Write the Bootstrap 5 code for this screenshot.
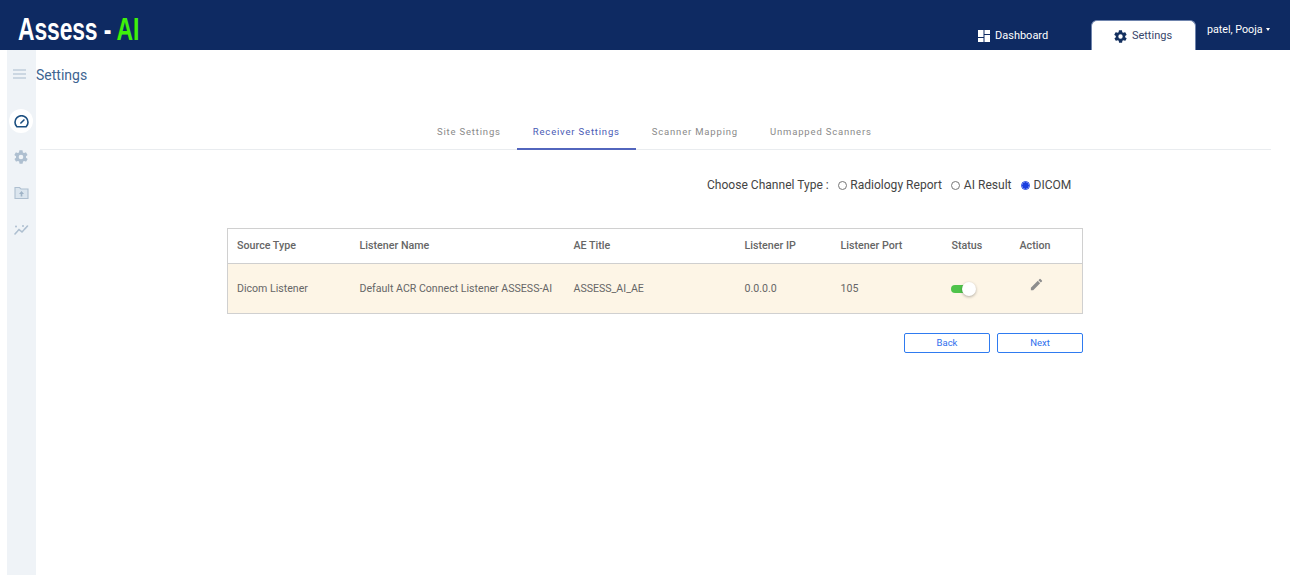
<!DOCTYPE html>
<html lang="en">
<head>
<meta charset="utf-8">
<title>Settings</title>
<link href="https://cdn.jsdelivr.net/npm/bootstrap@5.3.0/dist/css/bootstrap.min.css" rel="stylesheet">
<style>
html,body{height:100%;overflow:hidden}
body{font-family:Roboto,"Liberation Sans",sans-serif;background:#fff;color:#555}
.top-bar{height:50px;background:#0e2a62;border-bottom:1px solid #0e2a62}
.logo-text{font-family:"Liberation Sans",Arial,sans-serif;font-weight:700;font-size:31px;line-height:50px;color:#fff;margin-left:18px;transform:scaleX(.74);transform-origin:left center;white-space:nowrap;letter-spacing:-.2px;margin-top:5px}
.logo-ai{color:#3ff00a}
.nav-dash{color:#fff;font-size:11px;width:114px;padding:2px 0 0 1px;margin-top:20px;height:30px;display:flex;align-items:center;gap:5px;justify-content:flex-start}
.nav-set{width:105px;height:30px;margin-top:20px;background:#fff;border:1px solid #6f84ad;border-bottom:0;border-radius:6px 6px 0 0;color:#38456b;font-size:11px;display:flex;align-items:center;justify-content:center;gap:4px;padding:2px 2px 0 0}
.nav-user{color:#fff;font-size:10.7px;width:94px;padding:23px 0 0 11px;line-height:14px;white-space:nowrap}
.nav-user::after{content:"";display:inline-block;border-top:3px solid #fff;border-left:2.5px solid transparent;border-right:2.5px solid transparent;margin-left:3px;vertical-align:2px}
.page-wrap{height:525px}
.side-rail{width:29px;margin-left:7px;background:#eff3f7;flex:none;padding-top:17px}
.rail-btn{width:24px;height:24px;display:flex;align-items:center;justify-content:center;margin-left:2px;margin-bottom:12px;border-radius:50%}
.rail-btn.is-on{background:#fff}
.rail-menu{margin:0 0 28px;height:14px}
.page-title{font-size:14px;font-weight:400;line-height:18px;color:#3d6491;margin-top:16px;margin-bottom:0}
.tab-strip{margin:42px 19px 0 4px;border-bottom:1px solid #e9ecef;height:24px;gap:0;padding-left:381px}
.tab-item{font-size:9.5px;letter-spacing:.82px;color:#8a8a8a;padding:0 16px;line-height:11px;height:24px;white-space:nowrap}
.tab-item.is-active{color:#4a5bb5;border-bottom:2px solid #5265bd;height:24px}
.channel-row{margin-top:28px;height:15px;padding-left:671px;font-size:12.05px;line-height:15px;color:#444;white-space:nowrap}
.channel-label{margin-right:9px}
.channel-opt{display:inline-flex;align-items:center;margin-right:9.500px}
.radio-dot{width:9px;height:9px;border:1px solid #777;border-radius:50%;background:#fff;margin-right:3.500px;flex:none}
.radio-dot.is-on{border-color:#1a3fe0;background:radial-gradient(circle,#1a3fe0 0 3px,#fff 3.4px)}
.data-wrap{margin:35px 0 0 191px;width:856px}
.data-tbl{width:855px;table-layout:fixed;border-collapse:collapse;border:1px solid #d0d0d0;margin:0}
.data-tbl th{height:35px;font-weight:500;font-size:10.7px;color:#666;padding:0 0 0 9px;border-bottom:1px solid #cfcfcf;vertical-align:middle;white-space:nowrap}
.data-tbl td{height:50px;background:#fdf5e6;font-size:10.6px;color:#666;padding:0 0 0 9px;vertical-align:middle;white-space:nowrap}
.col-a{width:123px}.col-b{width:214px}.col-c{width:171px}.col-d{width:96px}.col-e{width:111px}.col-f{width:68px}.col-g{width:72px}
.toggle-track{display:block;height:8px;position:relative;background:#4fc34a;border-radius:4px;width:20px;margin-left:-1px}
.toggle-knob{position:absolute;right:-5px;top:-3px;width:14px;height:14px;background:#fff;border-radius:50%;box-shadow:0 1px 3px rgba(0,0,0,.3)}
.edit-ico{margin:0 0 8px 9px}
.btn-row{margin-top:19px;gap:7px}
.btn-step{width:86px;height:20px;padding:0;font-size:9.5px;line-height:18px;color:#2f6fed;background:#fff;border:1px solid #2f7bf0;border-radius:2px}
</style>
</head>
<body>
<header class="top-bar d-flex">
  <div class="logo-text flex-grow-1">Assess - <span class="logo-ai">AI</span></div>
  <a class="nav-dash text-decoration-none" href="#">
    <svg width="12" height="12" viewBox="0 0 12 12" aria-hidden="true"><path fill="#fff" d="M0 0h5.500v7H0zM6.500 0H12v4H6.500zM6.500 5H12v7H6.500zM0 8h5.500v4H0z"/></svg>
    <span>Dashboard</span>
  </a>
  <a class="nav-set text-decoration-none" href="#">
    <svg width="15" height="15" viewBox="0 0 24 24" aria-hidden="true"><path fill="#14305f" d="M19.400 13c.1-.3.100-.7.100-1s0-.7-.1-1l2.100-1.600c.2-.2.2-.4.100-.6l-2-3.500c-.1-.2-.4-.3-.6-.2l-2.500 1c-.5-.4-1.100-.7-1.700-1l-.4-2.600c0-.3-.2-.5-.5-.5h-4c-.3 0-.5.200-.5.500l-.4 2.600c-.6.300-1.200.6-1.700 1l-2.500-1c-.2-.1-.5 0-.6.200l-2 3.500c-.1.200-.1.400.1.600L4.600 11c-.1.300-.1.700-.1 1s0 .7.100 1l-2.100 1.600c-.2.200-.2.400-.1.600l2 3.500c.1.200.4.300.6.200l2.500-1c.5.400 1.100.7 1.700 1l.4 2.600c0 .3.200.5.500.5h4c.3 0 .5-.2.500-.5l.4-2.600c.6-.3 1.200-.6 1.700-1l2.500 1c.2.100.5 0 .6-.2l2-3.500c.1-.2.100-.4-.1-.6L19.400 13zM12 15.500a3.500 3.500 0 1 1 0-7 3.500 3.500 0 0 1 0 7z"/></svg>
    <span>Settings</span>
  </a>
  <div class="nav-user">patel, Pooja</div>
</header>
<div class="page-wrap d-flex">
  <nav class="side-rail">
    <div class="rail-btn rail-menu">
      <svg width="13" height="10" viewBox="0 0 13 10" aria-hidden="true"><path stroke="#a9bccd" stroke-width="1.200" d="M0 1h13M0 5h13M0 9h13"/></svg>
    </div>
    <div class="rail-btn is-on">
      <svg width="15" height="13" viewBox="0 0 24 21" aria-hidden="true"><path fill="none" stroke="#1c4f80" stroke-width="2.600" d="M4.500 19a10.500 10.500 0 1 1 15 0z"/><path stroke="#1c4f80" stroke-width="2.600" stroke-linecap="round" d="M11 13l5-5"/></svg>
    </div>
    <div class="rail-btn">
      <svg width="16" height="16" viewBox="0 0 24 24" aria-hidden="true"><path fill="#aebfd0" d="M19.400 13c.1-.3.100-.7.100-1s0-.7-.1-1l2.100-1.600c.2-.2.2-.4.100-.6l-2-3.500c-.1-.2-.4-.3-.6-.2l-2.500 1c-.5-.4-1.100-.7-1.700-1l-.4-2.600c0-.3-.2-.5-.5-.5h-4c-.3 0-.5.200-.5.500l-.4 2.600c-.6.300-1.200.6-1.700 1l-2.500-1c-.2-.1-.5 0-.6.200l-2 3.500c-.1.200-.1.400.1.600L4.600 11c-.1.300-.1.700-.1 1s0 .7.100 1l-2.100 1.600c-.2.200-.2.400-.1.600l2 3.500c.1.200.4.300.6.200l2.500-1c.5.400 1.100.7 1.700 1l.4 2.600c0 .3.200.5.500.5h4c.3 0 .5-.2.500-.5l.4-2.600c.6-.3 1.200-.6 1.700-1l2.500 1c.2.100.5 0 .6-.2l2-3.500c.1-.2.100-.4-.1-.6L19.400 13zM12 15.500a3.500 3.500 0 1 1 0-7 3.500 3.500 0 0 1 0 7z"/></svg>
    </div>
    <div class="rail-btn">
      <svg width="15" height="14" viewBox="0 0 15 14" aria-hidden="true"><path fill="#dbe5ee" stroke="#aebfd0" stroke-width="1.100" d="M1 12.500V1.500h4.500L7 3h7v9.500z"/><path fill="#9fb3c6" d="M7.500 5L10 8H8.300v2.500H6.700V8H5z"/></svg>
    </div>
    <div class="rail-btn">
      <svg width="15" height="11" viewBox="0 0 15 11" aria-hidden="true"><path fill="none" stroke="#aebfd0" stroke-width="1.600" stroke-linecap="round" stroke-dasharray="3 1.300" d="M1 10l4-4.500 3 2.500 5.500-6"/><circle cx="2" cy="2.500" r="1" fill="#aebfd0"/><circle cx="9" cy="2" r="1" fill="#aebfd0"/></svg>
    </div>
  </nav>
  <main class="flex-grow-1">
    <h1 class="page-title">Settings</h1>
    <div class="tab-strip d-flex">
      <div class="tab-item">Site Settings</div>
      <div class="tab-item is-active">Receiver Settings</div>
      <div class="tab-item">Scanner Mapping</div>
      <div class="tab-item">Unmapped Scanners</div>
    </div>
    <div class="channel-row d-flex">
      <span class="channel-label">Choose Channel Type :</span>
      <span class="channel-opt"><span class="radio-dot"></span>Radiology Report</span>
      <span class="channel-opt"><span class="radio-dot"></span>AI Result</span>
      <span class="channel-opt"><span class="radio-dot is-on"></span>DICOM</span>
    </div>
    <div class="data-wrap">
      <table class="data-tbl">
        <colgroup><col class="col-a"><col class="col-b"><col class="col-c"><col class="col-d"><col class="col-e"><col class="col-f"><col class="col-g"></colgroup>
        <thead>
          <tr><th>Source Type</th><th>Listener Name</th><th>AE Title</th><th>Listener IP</th><th>Listener Port</th><th>Status</th><th>Action</th></tr>
        </thead>
        <tbody>
          <tr>
            <td>Dicom Listener</td>
            <td>Default ACR Connect Listener ASSESS-AI</td>
            <td>ASSESS_AI_AE</td>
            <td>0.0.0.0</td>
            <td>105</td>
            <td><span class="toggle-track"><span class="toggle-knob"></span></span></td>
            <td><svg width="15" height="15" viewBox="0 0 24 24" class="edit-ico" aria-hidden="true"><path fill="#8d8d8d" d="M3 17.250V21h3.750L17.800 9.940l-3.750-3.750zM20.700 7.040a1 1 0 0 0 0-1.410l-2.340-2.340a1 1 0 0 0-1.410 0l-1.830 1.830 3.750 3.750z"/></svg></td>
          </tr>
        </tbody>
      </table>
      <div class="btn-row d-flex justify-content-end">
        <button type="button" class="btn btn-step">Back</button>
        <button type="button" class="btn btn-step">Next</button>
      </div>
    </div>
  </main>
</div>
</body>
</html>
